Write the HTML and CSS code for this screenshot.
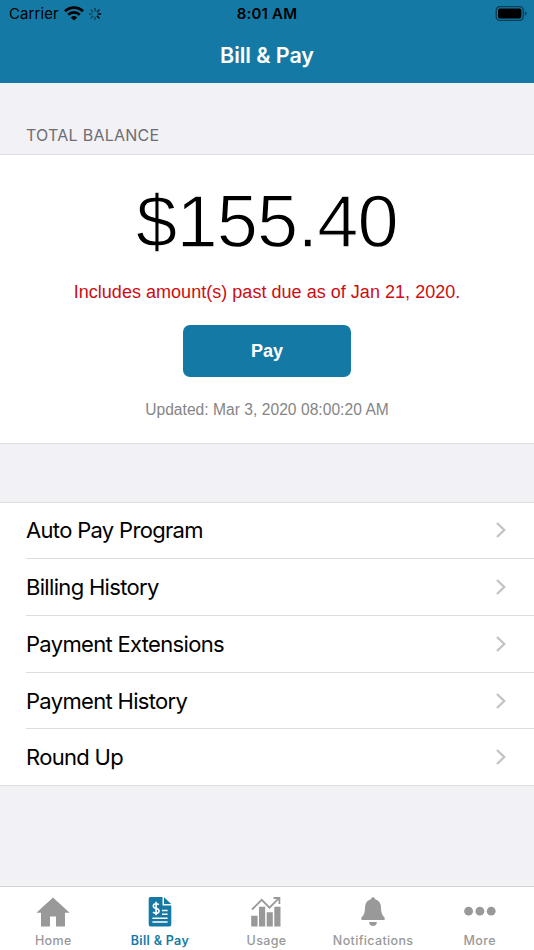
FILE: index.html
```html
<!DOCTYPE html>
<html lang="en">

<head>
    <meta charset="UTF-8">
    <meta name="viewport" content="width=device-width, initial-scale=1.0">
    <title>Bill &amp; Pay</title>
    <link rel="stylesheet" href="styles.css">
</head>

<body>
    <header class="header">
        <div class="status-bar">
            <div class="status-left">
                <span class="carrier">Carrier</span>
                <svg class="wifi" width="20" height="15" viewBox="0 0 20 15">
                    <path d="M1 5.2 A13 13 0 0 1 19 5.2" fill="none" stroke="#000" stroke-width="2.9" />
                    <path d="M4.2 8.7 A8.4 8.4 0 0 1 15.8 8.7" fill="none" stroke="#000" stroke-width="2.6" />
                    <path d="M6.8 11.4 A4.8 4.8 0 0 1 13.2 11.4 L10 14.6 Z" />
                </svg>
                <svg class="spinner" width="14" height="14" viewBox="-7 -7 14 14" stroke="#000" stroke-width="1.5" stroke-linecap="round">
                    <path d="M0 -3.3V-5.6" opacity=".5" />
                    <path d="M2.3 -2.3L4 -4" opacity=".75" />
                    <path d="M3.3 0H5.6" />
                    <path d="M2.3 2.3L4 4" />
                    <path d="M0 3.3V5.6" opacity=".4" />
                    <path d="M-2.3 2.3L-4 4" opacity=".4" />
                    <path d="M-3.3 0H-5.6" opacity=".4" />
                    <path d="M-2.3 -2.3L-4 -4" opacity=".4" />
                </svg>
            </div>
            <span class="time">8:01 AM</span>
            <div class="status-right">
                <svg width="32" height="16" viewBox="0 0 32 16">
                    <rect x="1.2" y=".7" width="27" height="13.6" rx="3.6" fill="none" stroke="#000" stroke-opacity=".5" stroke-width="1.3" />
                    <rect x="3" y="2.5" width="23.4" height="10" rx="2" />
                    <path d="M29.8 5.2 Q31.7 5.9 31.7 7.5 Q31.7 9.1 29.8 9.8 Z" opacity=".5" />
                </svg>
            </div>
        </div>
        <h1 class="title">Bill &amp; Pay</h1>
    </header>

    <main class="content">
        <h2 class="section-label">TOTAL BALANCE</h2>
        <section class="balance">
            <div class="amount">$155.40</div>
            <p class="past-due">Includes amount(s) past due as of Jan 21, 2020.</p>
            <button class="pay-btn" type="button">Pay</button>
            <p class="updated">Updated: Mar 3, 2020 08:00:20 AM</p>
        </section>

        <ul class="menu">
            <li class="menu-item">
                <span class="menu-text">Auto Pay Program</span>
                <svg class="chevron" width="12" height="18" viewBox="0 0 12 18"><path d="M2 2L9.2 9L2 16" /></svg>
            </li>
            <li class="menu-item">
                <span class="menu-text">Billing History</span>
                <svg class="chevron" width="12" height="18" viewBox="0 0 12 18"><path d="M2 2L9.2 9L2 16" /></svg>
            </li>
            <li class="menu-item">
                <span class="menu-text">Payment Extensions</span>
                <svg class="chevron" width="12" height="18" viewBox="0 0 12 18"><path d="M2 2L9.2 9L2 16" /></svg>
            </li>
            <li class="menu-item">
                <span class="menu-text">Payment History</span>
                <svg class="chevron" width="12" height="18" viewBox="0 0 12 18"><path d="M2 2L9.2 9L2 16" /></svg>
            </li>
            <li class="menu-item">
                <span class="menu-text">Round Up</span>
                <svg class="chevron" width="12" height="18" viewBox="0 0 12 18"><path d="M2 2L9.2 9L2 16" /></svg>
            </li>
        </ul>
    </main>

    <nav class="tab-bar">
        <a class="tab">
            <svg width="34" height="32" viewBox="0 0 34 32">
                <path d="M17 1.5L33.6 16.7H29V30.5H20V20.5H14V30.5H5V16.7H.4Z" />
            </svg>
            <span>Home</span>
        </a>
        <a class="tab active">
            <svg width="34" height="32" viewBox="0 0 34 32">
                <path d="M7.3 1H19.5V9.5H28.3V28.5Q28.3 30.5 26.3 30.5H7.3Q5.7 30.5 5.7 28.5V3Q5.7 1 7.3 1Z" />
                <path d="M21 1.2L28.2 8H21Z" />
                <g fill="none" stroke="#fff" stroke-width="1.6">
                    <path d="M15.8 8.7Q14.8 7.8 13.2 7.8Q10.3 7.8 10.3 10Q10.3 11.8 13 12.3Q16 12.9 16 14.9Q16 17.2 13.1 17.2Q11.2 17.2 10 16.1M13.1 5.8V19.2" />
                    <path d="M19 14.5H24.6M19 18.3H24.6M9.4 22.2H24.6M9.4 26H24.6" />
                </g>
            </svg>
            <span>Bill &amp; Pay</span>
        </a>
        <a class="tab">
            <svg width="34" height="32" viewBox="0 0 34 32">
                <path d="M2.2 19.7H8.6V30.5H2.2ZM10 10.7H16.2V30.5H10ZM17.7 16.2H23.8V30.5H17.7ZM25.3 10.7H31.5V30.5H25.3Z" />
                <path d="M3 13.5L12.7 3.8L20.5 11.7L30 2.2M24.5 2H30.4V8" fill="none" stroke="#999" stroke-width="1.8" />
            </svg>
            <span>Usage</span>
        </a>
        <a class="tab">
            <svg width="34" height="32" viewBox="0 0 34 32">
                <path d="M17 1.2Q18.9 1.2 19.2 3.3Q25 5 25 12Q25 18.5 28.6 21.5V24H5.4V21.5Q9 18.5 9 12Q9 5 14.8 3.3Q15.1 1.2 17 1.2Z" />
                <path d="M13.1 26H20.9Q20.5 30 17 30Q13.5 30 13.1 26Z" />
            </svg>
            <span>Notifications</span>
        </a>
        <a class="tab">
            <svg width="34" height="32" viewBox="0 0 34 32">
                <circle cx="5.6" cy="15.2" r="4.4" />
                <circle cx="16.9" cy="15.2" r="4.4" />
                <circle cx="28.2" cy="15.2" r="4.4" />
            </svg>
            <span>More</span>
        </a>
    </nav>
</body>

</html>
```

FILE: styles.css
```css
:root {
    --primary-color: #147aa5;
    --page-bg: #f2f1f6;
    --line-color: #dddde0;
    --tab-color: #999999;
}

* {
    margin: 0;
    padding: 0;
    box-sizing: border-box;
}

body {
    height: 950px;
    display: flex;
    flex-direction: column;
    background: var(--page-bg);
    font-family: Inter, "Liberation Sans", sans-serif;
    color: #000;
    overflow: hidden;
}

.header {
    height: 83px;
    flex: none;
    background: var(--primary-color);
}

.status-bar {
    height: 27px;
    padding: 0 7px 0 9px;
    display: grid;
    grid-template-columns: 1fr auto 1fr;
    align-items: center;
    font-size: 15px;
}

.status-left {
    display: flex;
    align-items: center;
}

.carrier {
    letter-spacing: 0.1px;
}

.wifi {
    margin-left: 5px;
}

.spinner {
    margin-left: 4px;
}

.time {
    margin-right: 2px;
    font-weight: 600;
    letter-spacing: 0.2px;
}

.status-right {
    display: flex;
    justify-content: flex-end;
}

.title {
    padding-top: 14px;
    color: #fff;
    font-size: 21.5px;
    font-weight: 600;
    line-height: 28px;
    letter-spacing: -0.05px;
    text-align: center;
}

.content {
    flex: 1;
}

.section-label {
    height: 71px;
    padding: 42px 26px 0;
    color: #6d6d72;
    font-size: 16px;
    font-weight: 400;
    line-height: 20px;
    letter-spacing: 0.25px;
}

.balance {
    height: 290px;
    display: flex;
    flex-direction: column;
    align-items: center;
    background: #fff;
    border-top: 1px solid var(--line-color);
    border-bottom: 1px solid var(--line-color);
    font-family: "Liberation Sans", Arial, sans-serif;
}

/* the white stroke thins the digits to a light weight */
.amount {
    margin-top: 25px;
    font-size: 74px;
    line-height: 84px;
    letter-spacing: -0.8px;
    -webkit-text-stroke: 1.3px #fff;
}

.past-due {
    margin-top: 17px;
    color: #cc0d12;
    font-size: 18px;
    line-height: 22px;
    letter-spacing: 0.03px;
}

.pay-btn {
    width: 168px;
    height: 52px;
    margin-top: 22px;
    flex: none;
    background: var(--primary-color);
    color: #fff;
    border: none;
    border-radius: 7px;
    font-family: inherit;
    font-size: 18px;
    font-weight: bold;
    cursor: pointer;
}

.updated {
    margin-top: 23px;
    color: #858585;
    font-size: 15.6px;
    line-height: 20px;
    letter-spacing: 0.03px;
}

.menu {
    margin-top: 57.6px;
    background: #fff;
    border-top: 1px solid var(--line-color);
    border-bottom: 1px solid var(--line-color);
    list-style: none;
}

.menu-item {
    height: 56.7px;
    margin-left: 26px;
    padding-right: 27px;
    display: flex;
    align-items: center;
    justify-content: space-between;
    border-bottom: 1px solid var(--line-color);
}

.menu-item:last-child {
    height: 55.7px;
    border-bottom: none;
}

.menu-text {
    font-size: 22px;
    letter-spacing: -0.68px;
}

.chevron {
    fill: none;
    stroke: #c4c4c8;
    stroke-width: 2.4;
}

.tab-bar {
    height: 64px;
    padding-right: 1px;
    flex: none;
    display: grid;
    grid-template-columns: repeat(5, 1fr);
    background: #fff;
    border-top: 1px solid #d2d2d5;
}

.tab {
    padding-top: 9px;
    display: flex;
    flex-direction: column;
    align-items: center;
    color: var(--tab-color);
    fill: currentColor;
    font-size: 12.5px;
    font-weight: 500;
    line-height: 16px;
    letter-spacing: 0.35px;
}

.tab span {
    margin-top: 5px;
}

.tab.active {
    color: var(--primary-color);
    font-weight: 600;
}
```
